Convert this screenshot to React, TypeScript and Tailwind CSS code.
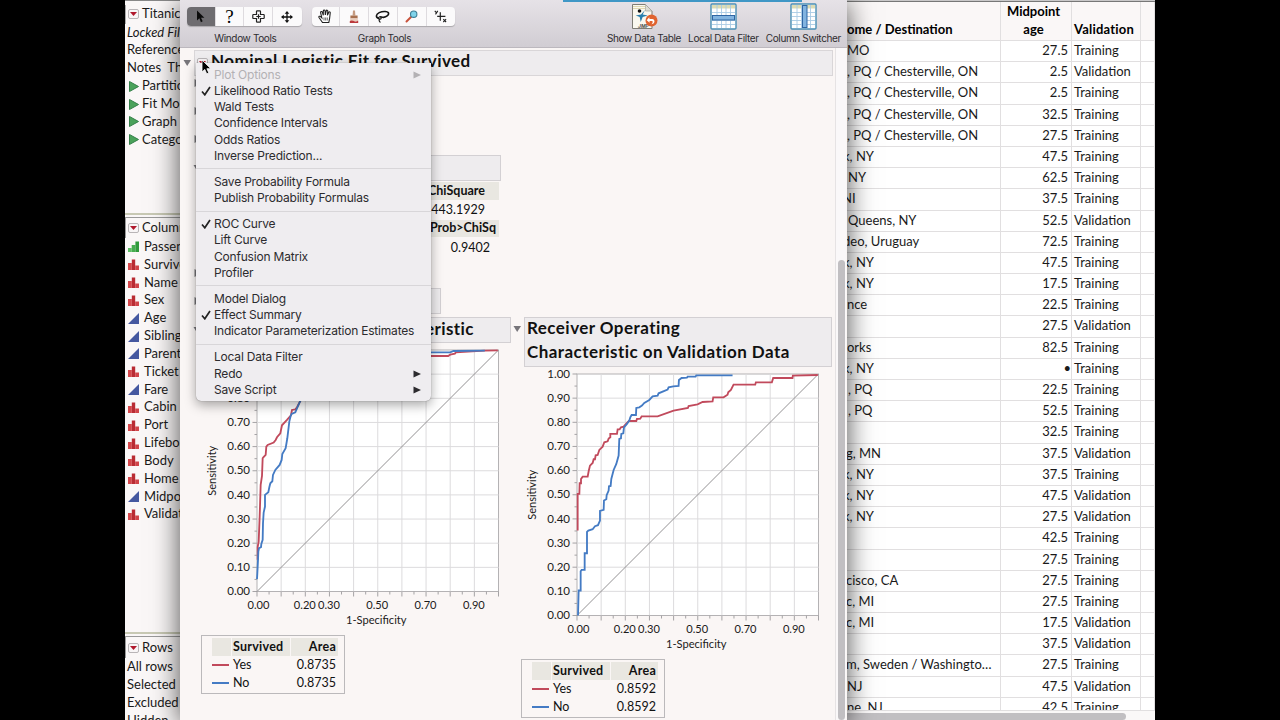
import React from "react";
import clsx from "clsx";

type Measure = "ordinal" | "nominal" | "continuous";

interface DataRow {
  place: string;
  age: string;
  split: "Training" | "Validation";
  // pixels of the place name scrolled off to the left
  scrolled?: number;
}

interface MenuEntry {
  label: string;
  checked?: boolean;
  submenu?: boolean;
  disabled?: boolean;
}

const scripts = ["Partition", "Fit Model", "Graph", "Category"];

const columns: { name: string; type: Measure }[] = [
  { name: "Passenger", type: "ordinal" },
  { name: "Survived", type: "nominal" },
  { name: "Name", type: "nominal" },
  { name: "Sex", type: "nominal" },
  { name: "Age", type: "continuous" },
  { name: "Siblings", type: "continuous" },
  { name: "Parents", type: "continuous" },
  { name: "Ticket", type: "nominal" },
  { name: "Fare", type: "continuous" },
  { name: "Cabin", type: "nominal" },
  { name: "Port", type: "nominal" },
  { name: "Lifeboat", type: "nominal" },
  { name: "Body", type: "nominal" },
  { name: "Home", type: "nominal" },
  { name: "Midpoint", type: "continuous" },
  { name: "Validation", type: "nominal" },
];

const rows: DataRow[] = [
  { place: "MO", age: "27.5", split: "Training", scrolled: 1 },
  { place: ", PQ / Chesterville, ON", age: "2.5", split: "Validation", scrolled: 1 },
  { place: ", PQ / Chesterville, ON", age: "2.5", split: "Training", scrolled: 1 },
  { place: ", PQ / Chesterville, ON", age: "32.5", split: "Training", scrolled: 1 },
  { place: ", PQ / Chesterville, ON", age: "27.5", split: "Training", scrolled: 1 },
  { place: "k, NY", age: "47.5", split: "Training", scrolled: 5 },
  { place: "NY", age: "62.5", split: "Training" },
  { place: "NI", age: "37.5", split: "Training", scrolled: 6 },
  { place: "Queens, NY", age: "52.5", split: "Validation" },
  { place: "deo, Uruguay", age: "72.5", split: "Training", scrolled: 5 },
  { place: "k, NY", age: "47.5", split: "Training", scrolled: 5 },
  { place: "k, NY", age: "17.5", split: "Training", scrolled: 5 },
  { place: "nce", age: "22.5", split: "Training", scrolled: 1 },
  { place: "", age: "27.5", split: "Validation" },
  { place: "orks", age: "82.5", split: "Training", scrolled: 1 },
  { place: "k, NY", age: "•", split: "Training", scrolled: 5 },
  { place: ", PQ", age: "22.5", split: "Training" },
  { place: ", PQ", age: "52.5", split: "Training" },
  { place: "", age: "32.5", split: "Training" },
  { place: "g, MN", age: "37.5", split: "Validation", scrolled: 2 },
  { place: "k, NY", age: "37.5", split: "Training", scrolled: 5 },
  { place: "k, NY", age: "47.5", split: "Validation", scrolled: 5 },
  { place: "k, NY", age: "27.5", split: "Validation", scrolled: 5 },
  { place: "", age: "42.5", split: "Training" },
  { place: "", age: "27.5", split: "Training" },
  { place: "cisco, CA", age: "27.5", split: "Training", scrolled: 2 },
  { place: "c, MI", age: "27.5", split: "Training", scrolled: 2 },
  { place: "c, MI", age: "17.5", split: "Validation", scrolled: 2 },
  { place: "", age: "37.5", split: "Validation" },
  { place: "m, Sweden / Washingto…", age: "27.5", split: "Training", scrolled: 2 },
  { place: "NJ", age: "47.5", split: "Validation", scrolled: 1 },
  { place: "ne, NJ", age: "42.5", split: "Training", scrolled: 1 },
];

const menuGroups: MenuEntry[][] = [
  [
    { label: "Plot Options", submenu: true, disabled: true },
    { label: "Likelihood Ratio Tests", checked: true },
    { label: "Wald Tests" },
    { label: "Confidence Intervals" },
    { label: "Odds Ratios" },
    { label: "Inverse Prediction..." },
  ],
  [
    { label: "Save Probability Formula" },
    { label: "Publish Probability Formulas" },
  ],
  [
    { label: "ROC Curve", checked: true },
    { label: "Lift Curve" },
    { label: "Confusion Matrix" },
    { label: "Profiler" },
  ],
  [
    { label: "Model Dialog" },
    { label: "Effect Summary", checked: true },
    { label: "Indicator Parameterization Estimates" },
  ],
  [
    { label: "Local Data Filter" },
    { label: "Redo", submenu: true },
    { label: "Save Script", submenu: true },
  ],
];

// Curves are drawn in a 725 x 725 plot space with the origin at the top left
const trainingYes =
  "2,630 2,592 5,575 8,500 11,405 15,378 17,325 19,322 26,315 28,290 32,285 50,278 56,270 60,262 70,250 75,226 90,210 102,196 105,180 115,178 120,172 129,155 150,120 200,90 280,55 380,32 460,24 524,18 574,18 580,14 594,11 597,7 634,5 684,2 723,1";
const trainingNo =
  "0,688 1,670 3,630 4,605 6,595 12,592 13,582 17,570 18,520 20,488 24,470 24,435 34,427 37,412 40,400 46,394 48,375 55,360 68,345 74,330 76,312 86,295 91,265 97,215 101,198 104,192 115,187 120,175 129,155 145,110 180,70 260,35 380,14 520,7 580,7 590,3 684,2";
const validationYes =
  "2,470 2,360 7,360 8,328 12,328 12,315 17,308 32,308 35,292 39,275 47,267 50,256 54,256 56,244 62,243 67,228 77,218 82,205 92,202 95,194 100,190 100,180 120,180 122,166 128,166 132,160 140,158 150,147 156,141 178,141 180,135 190,134 194,127 242,127 290,110 333,102 335,96 362,91 377,84 407,82 409,70 440,70 452,62 454,55 462,48 470,32 535,32 537,25 585,25 589,12 647,12 648,5 723,3";
const validationNo =
  "3,725 5,650 11,650 11,592 14,588 23,588 23,538 30,538 30,474 34,470 47,466 54,457 63,454 69,440 69,411 80,408 81,380 88,376 89,364 95,350 96,337 101,336 103,315 110,288 118,270 125,245 127,195 132,193 133,180 139,178 141,160 150,150 157,140 160,130 164,123 177,123 178,102 187,100 195,95 202,87 217,78 227,67 242,65 245,58 272,47 275,40 289,37 305,36 306,18 314,12 330,11 332,8 356,8 358,4 467,4";

function RedTriangle() {
  return (
    <span className="flex h-[10px] w-[11px] shrink-0 items-center justify-center rounded-[2px] border border-[#b9b5b7] bg-[#f8f5f6]">
      <svg width="7" height="4" viewBox="0 0 7 4">
        <path d="M0 0h7L3.5 4z" fill="#b0182c" />
      </svg>
    </span>
  );
}

function Disclosure({ open = false }: { open?: boolean }) {
  return (
    <svg width="8" height="8" viewBox="0 0 8 8" className="shrink-0">
      <path d={open ? "M0.5 1h7.5L4.2 7z" : "M0.5 0v8L7.5 4z"} fill="#77757a" />
    </svg>
  );
}

function ColumnIcon({ type }: { type: Measure }) {
  if (type === "continuous") {
    return (
      <svg width="11" height="11" viewBox="0 0 11 11" className="shrink-0">
        <path d="M0 11L11 0v11z" fill="#4558a0" />
      </svg>
    );
  }
  if (type === "ordinal") {
    return (
      <svg width="11" height="11" viewBox="0 0 11 11" className="shrink-0">
        <path d="M0 7h3.7v4H0z" fill="#5fbf66" />
        <path d="M3.7 4H7.4v7H3.7z" fill="#46ad50" />
        <path d="M7.4 0.5H11V11H7.4z" fill="#2f9a3c" />
      </svg>
    );
  }
  return (
    <svg width="11" height="11" viewBox="0 0 11 11" className="shrink-0">
      <path d="M0 4h3.8v7H0z" fill="#d5484c" />
      <path d="M3.8 0.5h3.4V11H3.8z" fill="#b92b33" />
      <path d="M7.2 6.5H11V11H7.2z" fill="#d04449" />
    </svg>
  );
}

function SidePanel() {
  return (
    <aside className="flex h-full w-[55px] shrink-0 flex-col overflow-hidden bg-[#faf7f7] text-[13px] leading-[17.9px] whitespace-nowrap">
      <div className="h-[213px] shrink-0 border-t border-[#888] pt-[4px]">
        <div className="flex h-[18.5px] items-center gap-[3px] border-l border-[#aaa] pl-[2px]">
          <RedTriangle />
          Titanic
        </div>
        <div className="pl-[2px] italic">Locked File</div>
        <div className="pl-[2px]">Reference</div>
        <div className="pl-[2px]">Notes&nbsp; Th</div>
        {scripts.map((name) => (
          <div key={name} className="flex items-center gap-[3px] pl-1">
            <svg width="10" height="11" viewBox="0 0 10 11" className="shrink-0">
              <path d="M0.5 0.5L9.5 5.5L0.5 10.5z" fill="#4aa25a" stroke="#35804a" />
            </svg>
            {name}
          </div>
        ))}
      </div>
      <div className="h-[423px] shrink-0 border-t-2 border-[#c8c9b4]">
        <div className="mt-[2px] flex h-[21px] items-center gap-[3px] border-t border-l border-[#999] pl-[2px]">
          <RedTriangle />
          Columns
        </div>
        {columns.map((c) => (
          <div key={c.name} className="flex h-[17.84px] items-center gap-[5px] pl-[3px]">
            <ColumnIcon type={c.type} />
            {c.name}
          </div>
        ))}
      </div>
      <div className="-mt-[4px] border-t-2 border-[#c8c9b4]">
        <div className="mt-[2px] flex h-[22px] items-center gap-[3px] border-t border-l border-[#999] pl-[2px]">
          <RedTriangle />
          Rows
        </div>
        {["All rows", "Selected", "Excluded", "Hidden"].map((label) => (
          <div key={label} className="pl-[2px]">
            {label}
          </div>
        ))}
      </div>
    </aside>
  );
}

function ArrowTool() {
  return (
    <svg width="9" height="13" viewBox="0 0 10 15">
      <path d="M1 0.5v11.5l2.7-2.5 1.8 4.5 2-0.9-1.9-4.2H9.5z" fill="#0b0b0b" />
    </svg>
  );
}

function HelpTool() {
  return (
    <span className="font-['Liberation_Serif',serif] text-[19px] leading-none text-black">?</span>
  );
}

function PlusTool() {
  return (
    <svg width="13" height="13" viewBox="0 0 13 13" fill="none" stroke="#222" strokeWidth="1.2">
      <path d="M4.5 1.5q0-0.7 0.7-0.7h2.6q0.7 0 0.7 0.7v3h3q0.7 0 0.7 0.7v2.6q0 0.7-0.7 0.7h-3v3q0 0.7-0.7 0.7H5.2q-0.7 0-0.7-0.7v-3h-3q-0.7 0-0.7-0.7V5.2q0-0.7 0.7-0.7h3z" />
      <path d="M6.5 4.3v4.4M4.3 6.5h4.4" />
    </svg>
  );
}

function MoveTool() {
  return (
    <svg width="12" height="12" viewBox="0 0 13 13">
      <path d="M6.5 2v9M2 6.5h9" stroke="#111" strokeWidth="1.4" />
      <path d="M6.5 0L9 3H4zM6.5 13L4 10h5zM0 6.5L3 4v5zM13 6.5L10 9V4z" fill="#111" />
    </svg>
  );
}

function HandTool() {
  return (
    <svg width="15" height="15" viewBox="0 0 15 15" fill="#fff" stroke="#222" strokeWidth="1.1">
      <path d="M4.5 13.5L1 8.5C0.4 7.3 1.8 6.8 2.6 7.6L3.8 8.8 2.6 3.6C2.4 2.3 3.9 2 4.3 3.2L5.3 6.3 5.3 2C5.4 0.7 6.9 0.7 7.1 2L7.3 6 8.2 1.9C8.5 0.8 9.9 1 9.8 2.3L9.4 6.3 10.8 3.3C11.4 2.3 12.6 2.9 12.2 4.1L11.6 9.5 10.8 13.5z" />
      <path d="M6 8.5v3M7.7 8.5v3M9.3 8.5v3" strokeWidth="0.7" />
    </svg>
  );
}

function BrushTool() {
  return (
    <svg width="10" height="14" viewBox="0 0 10 14">
      <path d="M4 0.5h2l0.4 5H3.6z" fill="#c59a80" />
      <path d="M1.4 5.5h7.2v3H1.4z" fill="#a8704f" />
      <path d="M1.4 8.3h7.2l0.5 3H0.9z" fill="#e8cdbc" />
      <path d="M0.8 11q2-1.2 4.2 0t4.2-0.4V13H0.8z" fill="#bb3a3c" />
    </svg>
  );
}

function LassoTool() {
  return (
    <svg width="15" height="14" viewBox="0 0 15 14" fill="none" stroke="#151515">
      <path
        d="M4 8.5C0.3 7.6 0.8 4.2 4.2 2.6C7.8 1 13 1 13.6 3.2C14 5.4 11 7 8.6 7.4C7 7.6 5.6 6.4 4.6 6.8"
        strokeWidth="1.6"
      />
      <path d="M4.6 6.8C3.4 7.2 3.3 9 4.6 9.2C6.4 9.4 6.6 7.6 5.6 7M4.2 9.2C3.8 10.6 4.2 11.8 5.4 12.6" strokeWidth="1.2" />
    </svg>
  );
}

function MagnifierTool() {
  return (
    <svg width="13" height="13" viewBox="0 0 13 13">
      <path d="M1.5 11.5L6 7" stroke="#c8523c" strokeWidth="2" strokeLinecap="round" />
      <circle cx="8.7" cy="4.2" r="3.2" fill="#7fd3ea" stroke="#3f7f96" strokeWidth="1.1" />
    </svg>
  );
}

function CrosshairTool() {
  return (
    <svg width="13" height="13" viewBox="0 0 13 13" fill="none" stroke="#222">
      <path d="M6.3 2.2v8.6M3.2 6.3h8.2" strokeWidth="1.2" />
      <path d="M0.8 0.9l1.5 1.8M3.8 0.9L1.5 4.4M9.3 9.2l2.8 2.8M12.1 9.2l-2.8 2.8" strokeWidth="1.1" />
    </svg>
  );
}

function ToolGroup({ label, tools, selected }: { label: string; tools: React.ReactNode[]; selected?: number }) {
  return (
    <div className="flex flex-col items-center">
      <div className="flex h-[19px] divide-x divide-[#dedbdf] overflow-hidden rounded-[4px] bg-[#fbfafb] shadow-[0_1px_1px_rgba(0,0,0,0.22)]">
        {tools.map((tool, i) => (
          <div
            key={i}
            className={clsx(
              "flex w-[28.7px] items-center justify-center",
              i === selected && "bg-[#6e6c70]",
            )}
          >
            {tool}
          </div>
        ))}
      </div>
      <span className="mt-[5px] pl-[2px] text-[10px] leading-[14px] tracking-[-0.35px]">{label}</span>
    </div>
  );
}

function DataTableIcon() {
  return (
    <svg width="27" height="27" viewBox="0 0 27 27">
      <path d="M1.5 1.5h13l6.5 6.5v17.5h-19.5z" fill="#faf8ef" stroke="#7e7d75" />
      <path d="M14.5 1.5V8H21z" fill="#deddd4" stroke="#a8a79e" strokeWidth="0.7" />
      <path d="M2 3.5h12M2 5.5h12" stroke="#d9cf9f" strokeWidth="0.8" />
      <circle cx="8.5" cy="8" r="1.8" fill="#111" />
      <path d="M14 7l-2.3 4.6 5 1-5 1.3-2 5-1-5-4-1.3 5.3-1.2z" fill="#2a7fae" />
      <text x="7" y="24.5" fontSize="5" fontWeight="700" fontStyle="italic" fill="#555">
        JMP
      </text>
      <circle cx="20.5" cy="17.5" r="6" fill="#e0632f" />
      <path d="M18.3 14.2l-2.6 3 2.9 2.5v-1.8h2.4c1 0 1 2.5-1 3.3 4.5 0 4.4-5.3 1.1-5.3h-2.6z" fill="#fff" />
    </svg>
  );
}

function GridIcon({ vertical = false }: { vertical?: boolean }) {
  return (
    <svg width="27" height="27" viewBox="0 0 27 27">
      <rect x="1" y="1" width="25" height="25" rx="1" fill="#fff" stroke="#4a8fb5" strokeWidth="1.4" />
      <path d="M2 2h23v3.5H2z" fill="#dcdcb4" />
      <path
        d="M2 9.5h23M2 13.5h23M2 17.5h23M2 21.5h23M7 2v23M11.5 2v23M16 2v23M20.5 2v23"
        stroke="#a9cbe4"
        strokeWidth="0.9"
      />
      {vertical ? (
        <rect x="12.5" y="2.5" width="4.5" height="22" fill="#82b4e0" stroke="#2f66a4" />
      ) : (
        <rect x="2.5" y="12.5" width="22" height="4.5" fill="#82b4e0" stroke="#2f66a4" />
      )}
    </svg>
  );
}

function ToolbarAction({ icon, label }: { icon: React.ReactNode; label: string }) {
  return (
    <div className="flex flex-col items-center">
      {icon}
      <span className="mt-[1px] text-[10px] leading-[14px] tracking-[-0.35px]">{label}</span>
    </div>
  );
}

function Toolbar() {
  return (
    <header className="flex h-[48px] shrink-0 border-b border-[#bcb8be] bg-linear-to-b from-[#e6e2e7] to-[#d1cdd3] pl-[7px] font-[Inter,sans-serif] whitespace-nowrap text-[#2e2c30]">
      <div className="flex gap-[10px] pt-[7px]">
        <ToolGroup
          label="Window Tools"
          selected={0}
          tools={[<ArrowTool />, <HelpTool />, <PlusTool />, <MoveTool />]}
        />
        <ToolGroup
          label="Graph Tools"
          tools={[<HandTool />, <BrushTool />, <LassoTool />, <MagnifierTool />, <CrosshairTool />]}
        />
      </div>
      <div className="ml-auto flex gap-[7px] pt-[3px] pr-[6px]">
        <ToolbarAction icon={<DataTableIcon />} label="Show Data Table" />
        <ToolbarAction icon={<GridIcon />} label="Local Data Filter" />
        <ToolbarAction icon={<GridIcon vertical />} label="Column Switcher" />
      </div>
    </header>
  );
}

function RocChart({ yes, no }: { yes: string; no: string }) {
  const size = 241.5;
  const left = 56;
  const top = 8;
  const bottom = top + size;
  const steps = Array.from({ length: 11 }, (_, i) => i);
  const halfSteps = Array.from({ length: 21 }, (_, i) => i);

  return (
    <svg width="310" height="293" viewBox="0 0 310 293" fontSize="11.5" fill="#1a1a1a" className="block">
      <rect x={left} y={top} width={size} height={size} fill="#fff" stroke="#b4b2b4" />
      {steps.slice(1, 10).map((i) => (
        <g key={i} stroke="#dcdbdd">
          <path d={`M${left + (size * i) / 10} ${top}v${size}`} />
          <path d={`M${left} ${top + (size * i) / 10}h${size}`} />
        </g>
      ))}
      {halfSteps.map((i) => (
        <g key={i} stroke="#a5a3a5">
          <path d={`M${left + (size * i) / 20} ${bottom}v${i % 2 ? 3 : 5}`} />
          <path d={`M${left} ${top + (size * i) / 20}h${i % 2 ? -2.5 : -4.5}`} />
        </g>
      ))}
      <path d={`M${left} ${bottom}L${left + size} ${top}`} stroke="#939193" />
      <svg
        x={left}
        y={top}
        width={size}
        height={size}
        viewBox="0 0 725 725"
        fill="none"
        strokeWidth="5.5"
        overflow="visible"
      >
        <polyline points={yes} stroke="#c14a5c" />
        <polyline points={no} stroke="#447bc4" />
      </svg>
      {steps.map((i) => (
        <text key={i} x={left - 7} y={bottom - (size * i) / 10 + 3.6} textAnchor="end">
          {(i / 10).toFixed(2)}
        </text>
      ))}
      {[0, 2, 3, 5, 7, 9].map((i) => (
        <text
          key={i}
          x={left + (size * i) / 10 + (i === 0 ? 1.5 : -0.5)}
          y={bottom + 17}
          textAnchor="middle"
          fontSize="11.1"
        >
          {(i / 10).toFixed(2)}
        </text>
      ))}
      <text x={left + size / 2 - 1.5} y={bottom + 32} textAnchor="middle" fontSize="11.1">
        1-Specificity
      </text>
      <text textAnchor="middle" fontSize="11" transform={`translate(15 ${top + size / 2}) rotate(-90)`}>
        Sensitivity
      </text>
    </svg>
  );
}

function AreaTable({ area }: { area: string }) {
  const legend = [
    { level: "Yes", color: "bg-[#c14a5c]" },
    { level: "No", color: "bg-[#447bc4]" },
  ];

  return (
    <div className="h-[59px] w-[144px] border border-[#bbb9bb] py-[2px] pr-[6px] pl-[10px] text-[12.5px]">
      <div className="grid h-[18px] grid-cols-[19px_58px_1fr] gap-x-px leading-[17px] font-bold tracking-[0.25px] *:bg-[#e9e7e1]">
        <span />
        <span className="pl-px">Survived</span>
        <span className="pr-[2px] text-right">Area</span>
      </div>
      {legend.map(({ level, color }) => (
        <div key={level} className="grid h-[18px] grid-cols-[19px_58px_1fr] items-center gap-x-px">
          <span className={clsx("h-[2px] w-[17px]", color)} />
          <span className="pl-px">{level}</span>
          <span className="pr-[2px] text-right">{area}</span>
        </div>
      ))}
    </div>
  );
}

function Report() {
  return (
    <main className="flex min-h-0 flex-1 bg-[#faf6f5] text-[#111]">
      <div className="flex h-full w-[655px] flex-col overflow-hidden pt-[2px] pl-[3px]">
        <div className="flex h-[26px] w-[650px] shrink-0 items-center">
          <Disclosure open />
          <div className="ml-[3px] flex h-[26px] flex-1 items-center gap-[3px] border border-[#d9d6d8] bg-[#eeecee] pl-[2px] text-[17px] font-bold tracking-[0.43px]">
            <RedTriangle />
            <span className="-mt-[5px]">Nominal Logistic Fit for Survived</span>
          </div>
        </div>
        <div className="flex h-[79px] shrink-0 flex-col justify-between pt-[3px] pb-3 pl-[11px]">
          <Disclosure />
          <Disclosure />
          <Disclosure />
        </div>
        <div className="flex h-[26px] shrink-0 items-center pl-[10px]">
          <Disclosure open />
          <div className="ml-[2px] h-full w-[298px] border border-[#d3d0d3] bg-[#eeecee]" />
        </div>
        <div className="mt-px ml-[240px] w-[76px] shrink-0 text-right text-[12.5px]">
          <div className="h-[18px] bg-[#e9e7e1] pr-[14px] leading-[17px] font-bold">ChiSquare</div>
          <div className="h-[20px] pr-[14px] leading-[20px]">443.1929</div>
          <div className="h-[17px] bg-[#e9e7e1] pr-[3px] leading-[16px] font-bold">Prob&gt;ChiSq</div>
          <div className="h-[20px] pr-[9px] leading-[21px]">0.9402</div>
        </div>
        <div className="flex h-[31px] shrink-0 items-end pb-[11px] pl-[11px]">
          <Disclosure />
        </div>
        <div className="flex h-[26px] shrink-0 items-center pl-[11px]">
          <Disclosure />
          <div className="h-full w-[239px] border border-[#d3d0d3] bg-[#eeecee]" />
        </div>
        <div className="mt-[2px] flex shrink-0">
          <section className="w-[321px]">
            <div className="mt-px flex h-[26px] items-center pl-[10px]">
              <Disclosure open />
              <div className="ml-[2px] flex h-full w-[308px] shrink-0 items-start justify-end border border-[#d3d0d3] bg-[#eeecee] pr-[36px] text-[17px] leading-[21px] font-bold tracking-[0.43px] whitespace-nowrap">
                Receiver Operating Characteristic
              </div>
            </div>
            <div className="-mt-px pl-[18px]">
              <RocChart yes={trainingYes} no={trainingNo} />
              <AreaTable area="0.8735" />
            </div>
          </section>
          <section className="w-[328px]">
            <div className="mt-px flex h-[50px] items-start pl-[9px]">
              <span className="flex pt-[8px]">
                <Disclosure open />
              </span>
              <div className="ml-[3px] h-full w-[308px] shrink-0 border border-[#d3d0d3] bg-[#eeecee] pl-[2px] text-[17px] leading-[24px] font-bold tracking-[0.45px]">
                <div className="-mt-[2px]">Receiver Operating</div>
                <div>Characteristic on Validation Data</div>
              </div>
            </div>
            <div className="-mt-px pl-[17px]">
              <RocChart yes={validationYes} no={validationNo} />
              <AreaTable area="0.8592" />
            </div>
          </section>
        </div>
      </div>
      <div className="flex w-[11px] flex-col border-l border-[#e6e3e4] bg-[#faf8f9] pt-[212px] pl-[2px]">
        <div className="w-[7px] flex-1 rounded-full bg-[#c1bfc2]" />
      </div>
    </main>
  );
}

function PopupMenu() {
  return (
    <div className="absolute top-[63px] left-[196px] z-20 w-[235px] rounded-b-[5px] bg-[#efedf0] pt-[4px] pb-[3px] font-[Inter,sans-serif] text-[12px] leading-[16.17px] tracking-[-0.2px] text-[#2c2b2e] shadow-[0_4px_12px_rgba(0,0,0,0.35),0_0_1px_rgba(0,0,0,0.5)]">
      {menuGroups.map((group, g) => (
        <div key={g}>
          {g > 0 && <div className="my-[4.5px] h-px bg-[#d8d6d9]" />}
          {group.map((item) => (
            <div
              key={item.label}
              className={clsx(
                "flex h-[16.17px] items-center pr-[10px] whitespace-nowrap",
                item.disabled && "text-[#b3b1b4]",
              )}
            >
              <span className="flex w-[18px] shrink-0 justify-center pl-[2px]">
                {item.checked && (
                  <svg width="10" height="10" viewBox="0 0 10 10">
                    <path d="M1 5.5L3.8 8.8L9 1" fill="none" stroke="#222" strokeWidth="1.7" />
                  </svg>
                )}
              </span>
              <span className="flex-1">{item.label}</span>
              {item.submenu && (
                <svg width="8" height="8" viewBox="0 0 8 8">
                  <path d="M0.5 0.5v7L8 4z" fill="currentColor" />
                </svg>
              )}
            </div>
          ))}
        </div>
      ))}
    </div>
  );
}

function DataTable() {
  return (
    <div className="flex h-full w-[308px] shrink-0 flex-col overflow-hidden bg-white text-[13px] whitespace-nowrap text-[#1a1a1a]">
      <div className="h-[2px] shrink-0 border-b border-[#777] bg-[#c9c8c9]" />
      <div className="grid h-[39px] shrink-0 grid-cols-[154px_71px_69px_14px] border-b border-[#e1dfe0] bg-[#faf7f7] leading-[18px] font-bold text-black *:border-r *:border-[#e1dfe0]">
        <div className="flex items-end pb-[2px]">ome / Destination</div>
        <div className="flex items-end justify-center pr-[5px] pb-[2px] text-center">
          Midpoint
          <br />
          age
        </div>
        <div className="flex items-end pb-[2px] pl-[2px] tracking-[0.2px]">Validation</div>
        <div />
      </div>
      <div className="min-h-0 flex-1 overflow-hidden">
        {rows.map((row, i) => (
          <div
            key={i}
            className="grid h-[21.2px] grid-cols-[154px_71px_69px_14px] border-b border-[#e1dfe0] leading-[19px] *:border-r *:border-[#e1dfe0]"
          >
            <div className="overflow-hidden pl-px">
              <div style={{ marginLeft: -(row.scrolled ?? 0) }}>{row.place}</div>
            </div>
            <div className={clsx("text-right", row.age === "•" ? "pr-0" : "pr-[3px]")}>{row.age}</div>
            <div className="pl-[2px]">{row.split}</div>
            <div />
          </div>
        ))}
      </div>
      <div className="h-[10px] shrink-0 border-t border-[#e1dfe0] bg-[#faf8f8] pt-[2px]">
        <div className="h-[7px] w-[279px] rounded-r-full bg-[#c1bfc2]" />
      </div>
    </div>
  );
}

export default function App() {
  return (
    <div className="relative flex h-[720px] w-[1280px] overflow-hidden bg-black pl-[125px] font-[Lato,sans-serif] text-[#1a1a1a]">
      <SidePanel />
      <div className="relative z-10 flex h-full w-[667px] shrink-0 flex-col shadow-[0_4px_26px_rgba(0,0,0,0.7)]">
        <Toolbar />
        <Report />
        <div className="absolute top-0 left-[383px] h-[1.5px] w-[239px] bg-[#3f97c6]" />
      </div>
      <DataTable />
      <div className="relative z-10 flex-1 bg-black" />
      <PopupMenu />
      <svg width="11" height="16" viewBox="0 0 11 16" className="absolute top-[59px] left-[201px] z-30">
        <path d="M1 1v12l2.8-2.6 1.9 4.4 2.1-0.9-1.9-4.2h3.9z" fill="#000" stroke="#fff" strokeWidth="0.8" />
      </svg>
    </div>
  );
}
